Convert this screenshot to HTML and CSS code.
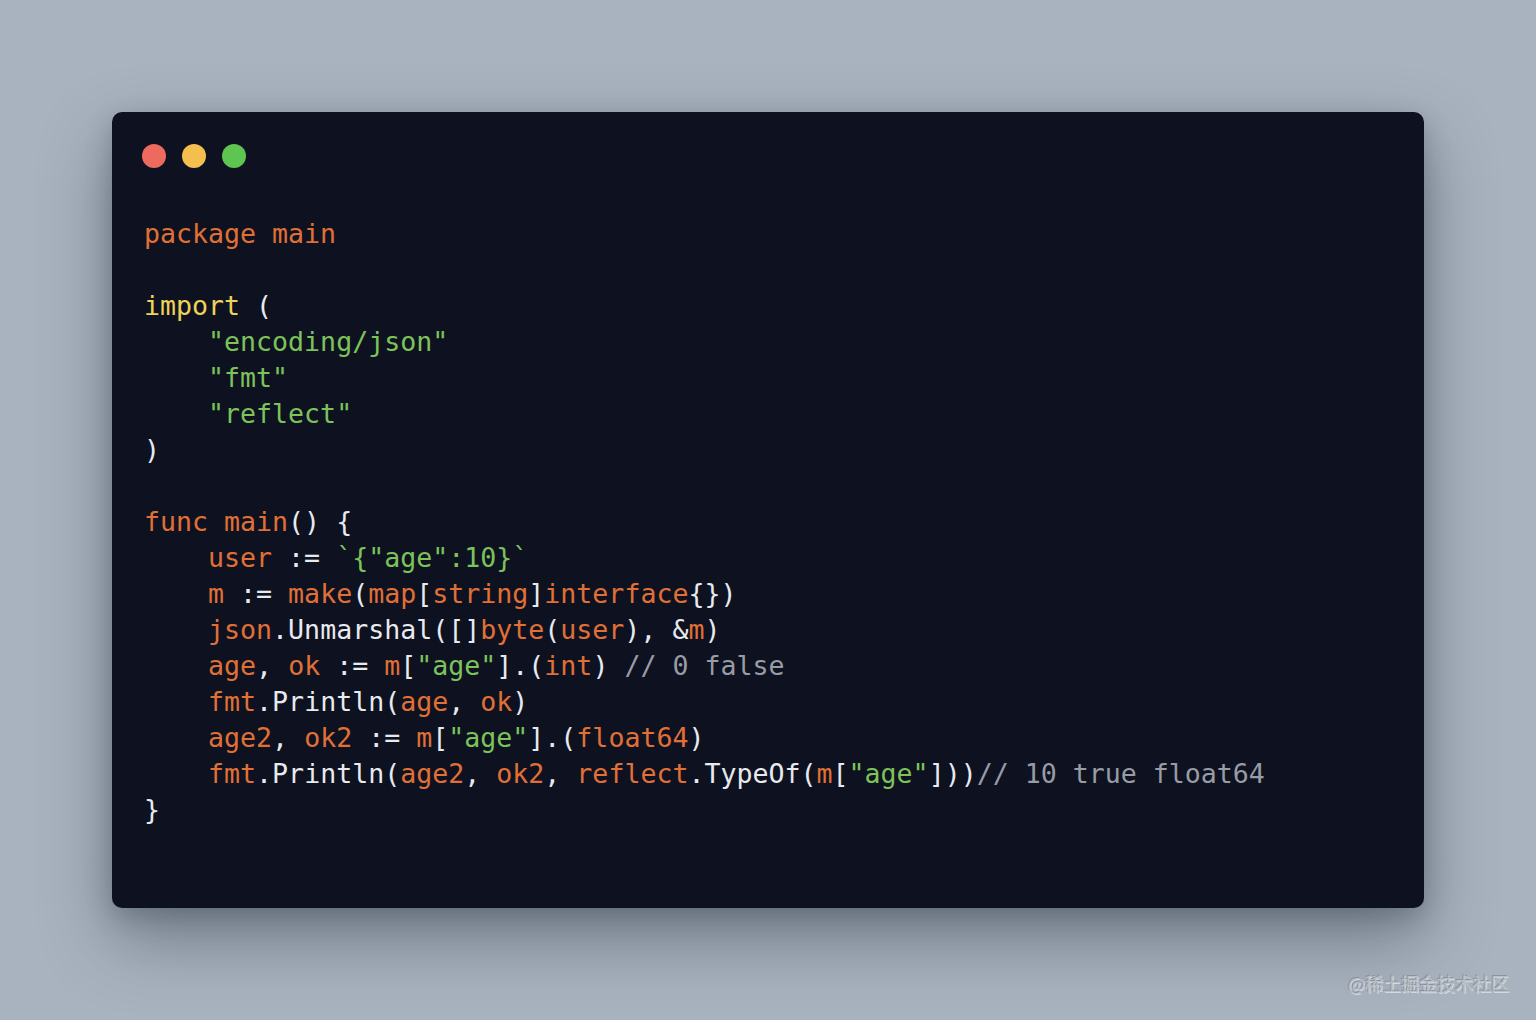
FILE: index.html
```html
<!DOCTYPE html>
<html>
<head>
<meta charset="utf-8">
<link rel="stylesheet" href="styles.css">
</head>
<body>
<div class="stage">
  <div class="window">
    <div class="dots">
      <span class="dot red"></span>
      <span class="dot yellow"></span>
      <span class="dot green"></span>
    </div>
<pre class="code"><span class="o">package main</span>

<span class="y">import</span> (
    <span class="g">"encoding/json"</span>
    <span class="g">"fmt"</span>
    <span class="g">"reflect"</span>
)

<span class="o">func main</span>() {
    <span class="o">user</span> := <span class="g">`{"age":10}`</span>
    <span class="o">m</span> := <span class="o">make</span>(<span class="o">map</span>[<span class="o">string</span>]<span class="o">interface</span>{})
    <span class="o">json</span>.Unmarshal([]<span class="o">byte</span>(<span class="o">user</span>), &amp;<span class="o">m</span>)
    <span class="o">age</span>, <span class="o">ok</span> := <span class="o">m</span>[<span class="g">"age"</span>].(<span class="o">int</span>) <span class="c">// 0 false</span>
    <span class="o">fmt</span>.Println(<span class="o">age</span>, <span class="o">ok</span>)
    <span class="o">age2</span>, <span class="o">ok2</span> := <span class="o">m</span>[<span class="g">"age"</span>].(<span class="o">float64</span>)
    <span class="o">fmt</span>.Println(<span class="o">age2</span>, <span class="o">ok2</span>, <span class="o">reflect</span>.TypeOf(<span class="o">m</span>[<span class="g">"age"</span>]))<span class="c">// 10 true float64</span>
}</pre>
  </div>
</div>
<div class="watermark">@稀土掘金技术社区</div>
</body>
</html>
```

FILE: styles.css
```css
html, body {
  margin: 0;
  padding: 0;
}
body {
  width: 1536px;
  height: 1020px;
  background: #a9b3bf;
  overflow: hidden;
  position: relative;
}
.stage {
  padding: 112px 0 0 112px;
}
.window {
  box-sizing: border-box;
  width: 1312px;
  height: 796px;
  background: #0e1220;
  border-radius: 10px;
  padding: 32px 0 0 30px;
  box-shadow: 0 30px 70px rgba(40, 50, 65, 0.45), 0 8px 24px rgba(40, 50, 65, 0.25);
}
.dots {
  display: flex;
  gap: 16px;
  height: 24px;
}
.dot {
  width: 24px;
  height: 24px;
  border-radius: 50%;
}
.red { background: #ec6a5e; }
.yellow { background: #f5bf4f; }
.green { background: #5ec550; }
.code {
  margin: 48px 0 0 2px;
  font-family: "DejaVu Sans Mono", monospace;
  font-size: 26.6px;
  line-height: 36px;
  color: #e8eaee;
  white-space: pre;
}
.o { color: #e07036; }
.y { color: #efd25a; }
.g { color: #7cc35a; }
.c { color: #979ca5; }
.watermark {
  position: absolute;
  left: 1348px;
  top: 971px;
  font-family: "Noto Sans CJK SC", sans-serif;
  font-size: 18px;
  line-height: 24px;
  color: #b9c0c8;
  text-shadow: -1px -1px 0 #8a929c, 1px 1px 0 #d4d9de;
}
```
